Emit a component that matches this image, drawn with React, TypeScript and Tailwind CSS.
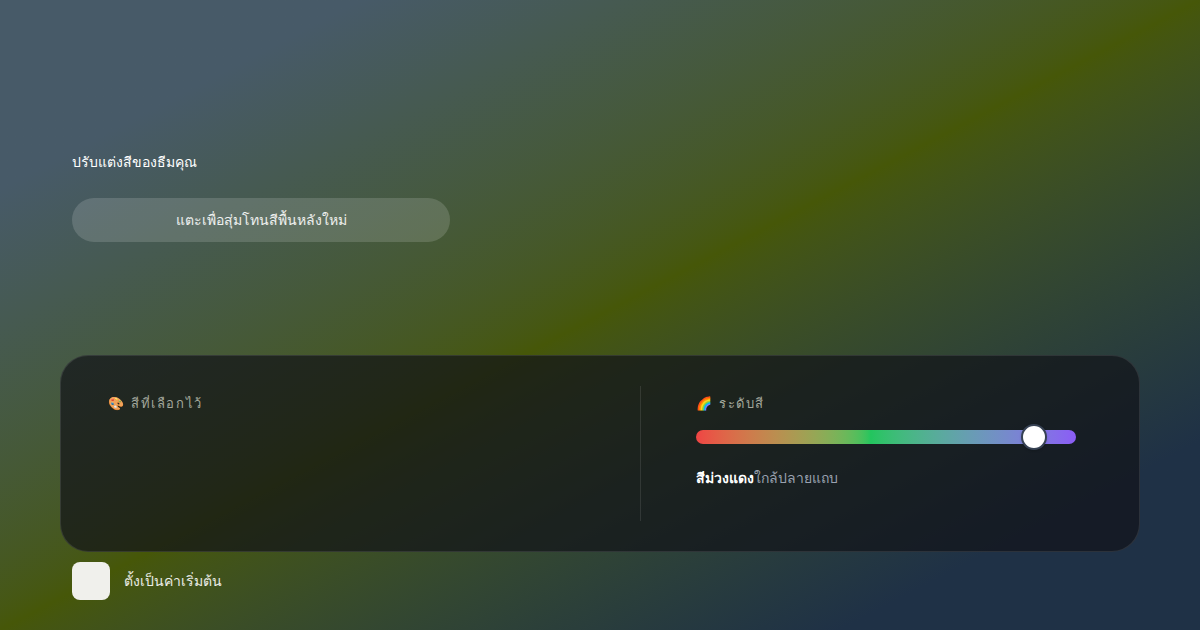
import { useState } from 'react'

export default function App() {
  const [hue] = useState(92)
  const [remember, setRemember] = useState(false)

  return (
    <div
      className="h-[630px] w-[1200px] overflow-hidden bg-gradient-to-br from-[#475a68] from-15% via-[#465708] via-50% to-[#1f3146] to-85% text-white"
      style={{ fontFamily: '"DejaVu Sans", "Noto Sans", sans-serif' }}
    >
      <div className="flex flex-col pt-[152px]">
        {/* Heading + random button */}
        <div className="px-[72px]">
          <h1 className="text-sm leading-5 font-medium text-white">ปรับแต่งสีของธีมคุณ</h1>
          <button className="mt-[26px] h-[44px] w-[378px] rounded-full bg-white/15 text-sm text-white/90">
            แตะเพื่อสุ่มโทนสีพื้นหลังใหม่
          </button>
        </div>

        {/* Preview + hue panel */}
        <div className="mx-[60px] mt-[113px] flex h-[197px] rounded-[28px] border border-white/10 bg-[#111318]/70 py-[30px] pl-[47px]">
          <div className="w-[532px] pt-2">
            <p className="text-[13px] leading-5 tracking-[0.12em] text-[#a3a89c]">🎨 สีที่เลือกไว้</p>
          </div>

          <div className="w-px bg-white/10" />

          <div className="flex-1 pt-2 pl-[55px] pr-[63px]">
            <p className="text-[13px] leading-5 tracking-[0.12em] text-[#a3a89c]">🌈 ระดับสี</p>

            <div className="relative mt-[16px] h-[14px] rounded-full bg-gradient-to-r from-[#ef4444] via-[#22c55e] via-[46%] to-[#8b5cf6]">
              <div
                className="absolute top-1/2 h-[26px] w-[26px] -translate-x-1/2 -translate-y-1/2 rounded-full border-2 border-gray-700 bg-white shadow"
                style={{ left: `calc(13px + ${hue}% * 0.93)` }}
              />
            </div>

            <p className="mt-[24px] text-sm leading-5">
              <span className="font-semibold text-white">สีม่วงแดง</span>
              <span className="text-gray-400">ใกล้ปลายแถบ</span>
            </p>
          </div>
        </div>

        {/* Remember toggle */}
        <div className="mt-[10px] flex items-center gap-[14px] px-[72px]">
          <button
            onClick={() => setRemember(!remember)}
            className="h-[38px] w-[38px] rounded-lg bg-[#f0f0ec]"
          />
          <span className="text-sm text-white/90">ตั้งเป็นค่าเริ่มต้น</span>
        </div>
      </div>
    </div>
  )
}
